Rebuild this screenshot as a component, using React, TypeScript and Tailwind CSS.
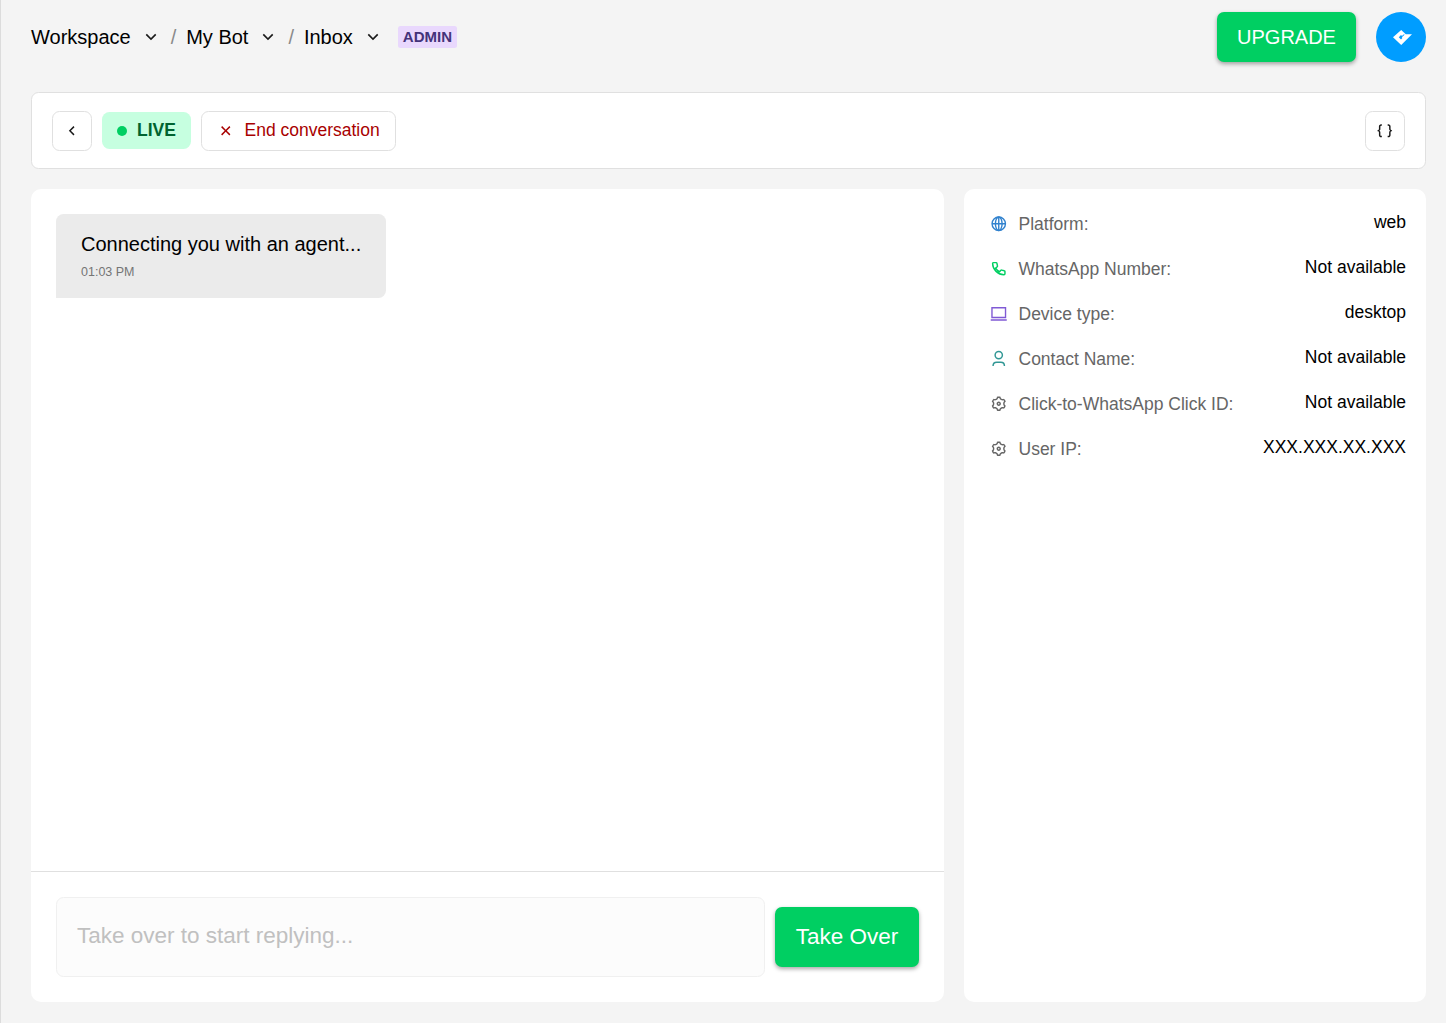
import type { ReactNode } from 'react';
import { RiArrowDownSLine, RiArrowLeftSLine, RiBracesLine, RiCloseLine, RiSettings3Line } from 'react-icons/ri';

const crumbs = ['Workspace', 'My Bot', 'Inbox'];

function GlobeIcon() {
  return (
    <svg viewBox="0 0 24 24" className="w-[17.5px] h-[17.5px] text-[#3182ce]" fill="none" stroke="currentColor" strokeWidth="1.9">
      <circle cx="12" cy="12" r="9.2" />
      <ellipse cx="12" cy="12" rx="4.6" ry="9.2" />
      <path d="M2.8 12h18.4M12 2.8v18.4" />
    </svg>
  );
}

function PhoneIcon() {
  return (
    <svg viewBox="0 0 24 24" className="w-[17.5px] h-[17.5px] text-[#00cf62]" fill="none" stroke="currentColor" strokeWidth="2" strokeLinejoin="round">
      <path d="M4.6 3.6h3.8c.6 0 1 .4 1.1 1l.8 3.6c.1.4 0 .8-.4 1.1l-2.1 1.8a13.5 13.5 0 0 0 5.3 5l1.8-1.9c.3-.3.7-.4 1.1-.3l3.5.8c.6.1 1 .6 1 1.1v3c0 .8-.6 1.4-1.4 1.4C11 20.200 3.600 13 3.600 4.900c0-.8.3-1.300 1-1.300z" />
    </svg>
  );
}

function LaptopIcon() {
  return (
    <svg viewBox="0 0 24 24" className="w-[17.5px] h-[17.5px] text-[#805ad5]" fill="none" stroke="currentColor" strokeWidth="1.9">
      <path d="M2.7 3.800h18.6v13.400H2.7zM1 20.600h22" />
    </svg>
  );
}

function PersonIcon() {
  return (
    <svg viewBox="0 0 24 24" className="w-[17.5px] h-[17.5px] text-[#319795]" fill="none" stroke="currentColor" strokeWidth="2">
      <circle cx="12" cy="7" r="5" />
      <path d="M4.2 22c0-3 2-5.100 5-5.100h5.600c3 0 5 2.100 5 5.100" />
    </svg>
  );
}

const details: { icon: ReactNode; label: string; value: string }[] = [
  { icon: <GlobeIcon />, label: 'Platform:', value: 'web' },
  { icon: <PhoneIcon />, label: 'WhatsApp Number:', value: 'Not available' },
  { icon: <LaptopIcon />, label: 'Device type:', value: 'desktop' },
  { icon: <PersonIcon />, label: 'Contact Name:', value: 'Not available' },
  { icon: <RiSettings3Line size={17.5} />, label: 'Click-to-WhatsApp Click ID:', value: 'Not available' },
  { icon: <RiSettings3Line size={17.5} />, label: 'User IP:', value: 'XXX.XXX.XX.XXX' },
];

function Header() {
  return (
    <header className="h-[74px] flex items-center justify-between pr-5 pl-[30px]">
      <nav className="flex items-center text-xl leading-[30px]">
        {crumbs.map((crumb, i) => (
          <div key={crumb} className="flex items-center">
            {i > 0 && <span className="w-[5.5px] mx-[10px] text-[#8a8a8a]">/</span>}
            <span>{crumb}</span>
            <RiArrowDownSLine size={20} className="ml-[10px] text-[#1a1a1a]" />
          </div>
        ))}
        <span className="ml-[15px] px-[5px] h-[22px] leading-[22px] rounded-[2.5px] bg-[#e9d8fd] text-[#44337a] text-[15px] font-bold">
          ADMIN
        </span>
      </nav>
      <div className="flex items-center gap-5">
        <button className="w-[139px] h-[50px] rounded-[7px] bg-[#00cf62] text-white text-xl shadow-[0_2px_4px_rgba(0,0,0,0.35)]">
          UPGRADE
        </button>
        <div className="w-[50px] h-[50px] rounded-full bg-[#009dff] flex items-center justify-center">
          <svg viewBox="0 0 19 15" className="w-[19px] h-[15px] ml-[2px]">
            <path fill="#fff" fillRule="evenodd" d="M0 7.300 8.200 0l4.600 4.200H19L8.200 15zM5.800 7.200l2.200 2.200 1.400-1.400-.6-.7 3-2.700-1.300-.2-1.500 1.600-1-1z" />
          </svg>
        </div>
      </div>
    </header>
  );
}

function Toolbar() {
  return (
    <div className="h-[77px] mt-[18px] px-5 flex items-center justify-between bg-white border border-[#e0e0e0] rounded-[7.5px]">
      <div className="flex items-center gap-[10px] text-[17.5px]">
        <button className="w-10 h-10 flex items-center justify-center border border-[#e0e0e0] rounded-[7.5px] text-[#1a1a1a]">
          <RiArrowLeftSLine size={17.5} />
        </button>
        <div className="w-[89px] h-[37px] pl-[15px] pb-px flex items-center gap-[10px] rounded-[7.5px] bg-[#c6ffe0] text-[#006330] font-bold">
          <span className="w-[10px] h-[10px] mt-px rounded-full bg-[#00cf62]" />
          LIVE
        </div>
        <button className="w-[195px] h-10 pl-[15px] pb-px flex items-center gap-[10px] border border-[#e0e0e0] rounded-[7.5px] text-[#a80000]">
          <RiCloseLine size={17.5} className="mt-px" />
          End conversation
        </button>
      </div>
      <button className="w-10 h-10 flex items-center justify-center border border-[#e0e0e0] rounded-[7.5px] text-[#1a1a1a]">
        <RiBracesLine size={17.5} />
      </button>
    </div>
  );
}

function Chat() {
  return (
    <section className="w-[913px] flex flex-col bg-white rounded-[10px]">
      <div className="flex-1 p-[25px]">
        <div className="w-[330px] h-[84px] pl-[25px] pt-[15px] bg-[#ebebeb] rounded-[7.5px] rounded-bl-none">
          <p className="text-xl leading-[30px]">Connecting you with an agent...</p>
          <p className="mt-1 text-[12.5px] leading-[19px] text-[#757575]">01:03 PM</p>
        </div>
      </div>
      <div className="h-[131px] px-[25px] flex items-center gap-[10px] border-t border-[#e0e0e0]">
        <div className="w-[709px] h-20 px-5 pb-[3px] flex items-center bg-[#fcfcfc] border border-[#f0f0f0] rounded-[7.5px] text-[22.5px] text-[#c0c0c0]">
          Take over to start replying...
        </div>
        <button className="w-36 h-[60px] rounded-[7px] bg-[#00cf62] text-white text-[22.5px] shadow-[0_2px_4px_rgba(0,0,0,0.35)]">
          Take Over
        </button>
      </div>
    </section>
  );
}

function Details() {
  return (
    <aside className="flex-1 pl-[26px] pr-5 pt-3 bg-white rounded-[10px] text-[17.5px]">
      {details.map((item) => (
        <div key={item.label} className="h-[45px] flex items-center justify-between">
          <div className="flex items-center gap-[11px] text-[#666666]">
            {item.icon}
            <span className="pt-px -mb-px">{item.label}</span>
          </div>
          <span className="pb-0.5">{item.value}</span>
        </div>
      ))}
    </aside>
  );
}

export default function App() {
  return (
    <div className="h-[1023px] border-l border-[#dcdcdc] bg-[#f4f4f4] text-black font-['Liberation_Sans',Arial,sans-serif]">
      <Header />
      <main className="pl-[30px] pr-5">
        <Toolbar />
        <div className="mt-5 h-[813px] flex gap-5">
          <Chat />
          <Details />
        </div>
      </main>
    </div>
  );
}
